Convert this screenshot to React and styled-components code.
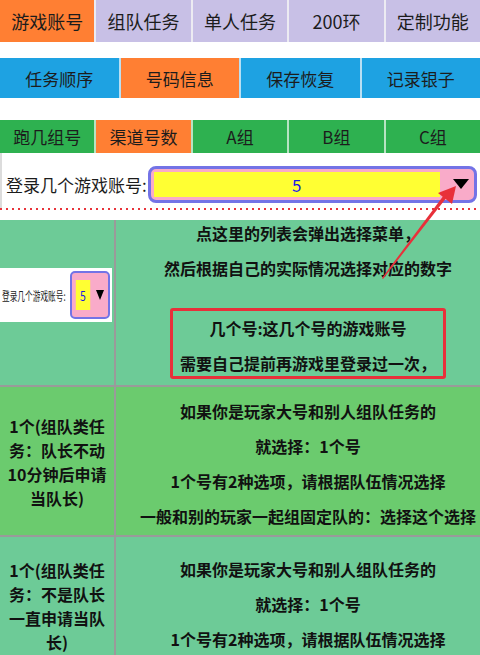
import React from "react";
import styled, { createGlobalStyle } from "styled-components";

const GlobalStyle = createGlobalStyle`
  body {
    margin: 0;
    width: 480px;
    overflow: hidden;
    background: #ffffff;
    font-family: "Noto Sans CJK SC", "Noto Sans", sans-serif;
    color: #1a1a1a;
  }
`;

const topTabs = ["游戏账号", "组队任务", "单人任务", "200环", "定制功能"];
const midTabs = ["任务顺序", "号码信息", "保存恢复", "记录银子"];
const lowTabs = ["跑几组号", "渠道号数", "A组", "B组", "C组"];

const Page = styled.div`
  position: relative;
  width: 480px;
  height: 655px;
  overflow: hidden;
`;

const TabBar = styled.div`
  display: flex;
  gap: 2px;
  height: ${(p) => p.$h}px;
  margin-top: ${(p) => p.$mt || 0}px;
  background: ${(p) => p.$line};
`;

const Tab = styled.div`
  flex: 1;
  display: flex;
  align-items: center;
  justify-content: center;
  font-size: ${(p) => p.$size}px;
  color: #1c1c1c;
  background: ${(p) => (p.$active ? "#ff7f33" : p.$bg)};
  white-space: nowrap;
`;

const LoginRow = styled.div`
  display: flex;
  align-items: center;
  box-sizing: border-box;
  height: 55px;
  padding: 7px 0 0 4px;
  border-left: 2px solid #dcdcdc;
`;

const Label = styled.span`
  font-size: 17px;
  color: #1c1c1c;
  white-space: nowrap;
`;

const Select = styled.div`
  display: flex;
  align-items: center;
  width: 329px;
  height: 37px;
  margin-left: 1px;
  box-sizing: border-box;
  border: 3px solid #7373e6;
  border-radius: 8px;
  background: #f9abc9;
  padding-left: 3px;
`;

const SelectValue = styled.div`
  width: 286px;
  height: 25px;
  background: #ffff33;
  display: flex;
  align-items: center;
  justify-content: center;
  font-size: 17px;
  color: #1a1ae6;
`;

const Caret = styled.div`
  width: 0;
  height: 0;
  margin-left: 13px;
  border-left: 8px solid transparent;
  border-right: 8px solid transparent;
  border-top: 10px solid #000;
`;

const DottedRule = styled.div`
  height: 2px;
  margin-bottom: 10px;
  background: repeating-linear-gradient(to right, #e8333a 0 2px, transparent 2px 6px);
`;

const Table = styled.div`
  display: grid;
  grid-template-columns: 114px 384px;
  grid-template-rows: 165px 148px 140px;
  gap: 2px;
  width: 500px;
  background: #9a9a9a;
`;

const Cell = styled.div`
  background: ${(p) => p.$bg};
  display: flex;
  flex-direction: column;
  align-items: center;
  justify-content: ${(p) => (p.$top ? "flex-start" : "center")};
  padding-top: ${(p) => p.$pt || 0}px;
  font-weight: 700;
  font-size: 16px;
  color: #111;
  text-align: center;
  white-space: nowrap;
`;

const Line = styled.div`
  line-height: ${(p) => p.$lh}px;
  margin-top: ${(p) => p.$mt || 0}px;
`;

const RedBox = styled.div`
  margin-top: 27px;
  border: 3px solid #e8303a;
  border-radius: 3px;
  padding: 4px 7px 0;
  display: flex;
  flex-direction: column;
  align-items: center;
`;

const MiniShot = styled.div`
  width: 112px;
  height: 54px;
  margin-top: 48px;
  align-self: flex-start;
  background: #fff;
  display: flex;
  align-items: center;
  font-weight: 400;
`;

const MiniLabel = styled.span`
  display: inline-block;
  width: 68px;
  font-size: 12px;
  color: #222;
  transform: scaleX(0.64);
  transform-origin: left center;
  margin-left: 2px;
  white-space: nowrap;
`;

const MiniSelect = styled.div`
  display: flex;
  align-items: center;
  width: 40px;
  height: 48px;
  box-sizing: border-box;
  border: 2px solid #7373e6;
  border-radius: 5px;
  background: #f9abc9;
  padding-left: 2px;
`;

const MiniValue = styled.div`
  width: 18px;
  height: 30px;
  background: #ffff33;
  display: flex;
  align-items: center;
  justify-content: center;
  font-size: 13px;
  color: #1a1ae6;
  transform: scaleX(0.8);
`;

const MiniCaret = styled.div`
  width: 0;
  height: 0;
  margin-left: 4px;
  border-left: 4px solid transparent;
  border-right: 4px solid transparent;
  border-top: 10px solid #000;
`;

const ArrowLayer = styled.svg`
  position: absolute;
  left: 0;
  top: 0;
  pointer-events: none;
`;

const Lines = ({ items, lh, gap }) =>
  items.map((t, i) => (
    <Line key={i} $lh={lh} $mt={i ? gap : 0}>
      {t}
    </Line>
  ));

const App = () => {
  return (
    <Page>
      <GlobalStyle />
      <TabBar $h={42} $line="#ecebf2">
        {topTabs.map((t, i) => (
          <Tab key={t} $size={18} $bg="#c8c0e6" $active={i === 0}>
            {t}
          </Tab>
        ))}
      </TabBar>
      <TabBar $h={40} $mt={16} $line="#b9dff3">
        {midTabs.map((t, i) => (
          <Tab key={t} $size={17} $bg="#1ea2e2" $active={i === 1}>
            {t}
          </Tab>
        ))}
      </TabBar>
      <TabBar $h={33} $mt={22} $line="#b7e3c2">
        {lowTabs.map((t, i) => (
          <Tab key={t} $size={17} $bg="#2eb150" $active={i === 1}>
            {t}
          </Tab>
        ))}
      </TabBar>

      <LoginRow>
        <Label>登录几个游戏账号:</Label>
        <Select>
          <SelectValue>5</SelectValue>
          <Caret />
        </Select>
      </LoginRow>
      <DottedRule />

      <Table>
        <Cell $bg="#6dcb97" $top>
          <MiniShot>
            <MiniLabel>登录几个游戏账号:</MiniLabel>
            <MiniSelect>
              <MiniValue>5</MiniValue>
              <MiniCaret />
            </MiniSelect>
          </MiniShot>
        </Cell>
        <Cell $bg="#6dcb97" $top>
          <Line $lh={26}>点这里的列表会弹出选择菜单，</Line>
          <Line $lh={26} $mt={9}>
            然后根据自己的实际情况选择对应的数字
          </Line>
          <RedBox>
            <Line $lh={26}>几个号:这几个号的游戏账号</Line>
            <Line $lh={26} $mt={9}>
              需要自己提前再游戏里登录过一次，
            </Line>
          </RedBox>
        </Cell>

        <Cell $bg="#6bcb6e" $pt={2}>
          <Lines items={["1个(组队类任", "务：队长不动", "10分钟后申请", "当队长)"]} lh={24} />
        </Cell>
        <Cell $bg="#6bcb6e" $pt={6}>
          <Lines
            items={[
              "如果你是玩家大号和别人组队任务的",
              "就选择：1个号",
              "1个号有2种选项，请根据队伍情况选择",
              "一般和别的玩家一起组固定队的：选择这个选择",
            ]}
            lh={35}
          />
        </Cell>

        <Cell $bg="#6dcb97" $top $pt={21}>
          <Lines items={["1个(组队类任", "务：不是队长", "一直申请当队", "长)"]} lh={24} />
        </Cell>
        <Cell $bg="#6dcb97" $top $pt={15}>
          <Lines
            items={[
              "如果你是玩家大号和别人组队任务的",
              "就选择：1个号",
              "1个号有2种选项，请根据队伍情况选择",
            ]}
            lh={35}
          />
        </Cell>
      </Table>

      <ArrowLayer width="480" height="655" viewBox="0 0 480 655">
        <polygon points="382,278 383,279 447,197 444,195" fill="#e8303a" />
        <polygon points="456,186 438,193 452,204" fill="#e8303a" />
      </ArrowLayer>
    </Page>
  );
};

export default App;
